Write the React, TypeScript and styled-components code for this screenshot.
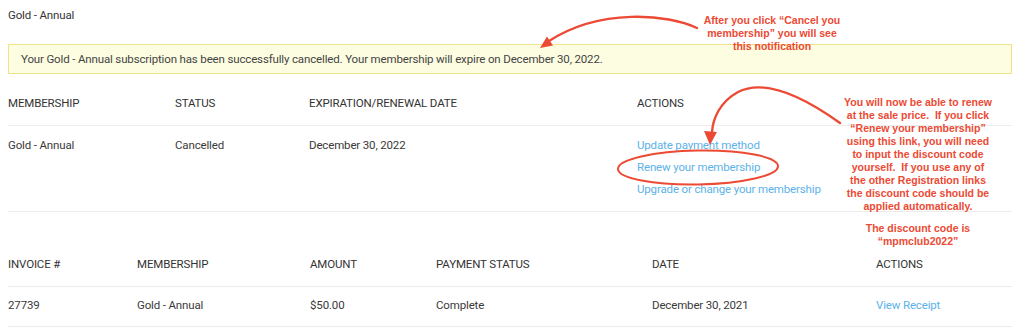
import styled, { createGlobalStyle } from 'styled-components';

const GlobalStyle = createGlobalStyle`
    html, body {
        margin: 0;
        padding: 0;
        background: #ffffff;
    }
    body {
        font-family: Roboto, "Liberation Sans", Arial, sans-serif;
        color: #3a3a3a;
    }
`;

const subscriptions = [
    { name: 'Gold - Annual', status: 'Cancelled', expires: 'December 30, 2022' },
];

const invoices = [
    { id: '27739', name: 'Gold - Annual', amount: '$50.00', status: 'Complete', date: 'December 30, 2021' },
];

const accent = '#ec4a34';

function App() {
    return (
        <>
            <GlobalStyle />
            <Page>
                <Title>Gold - Annual</Title>
                <Notice>
                    Your Gold - Annual subscription has been successfully cancelled. Your membership will expire on December 30, 2022.
                </Notice>

                <Table>
                    <colgroup>
                        <col style={{ width: 167 }} />
                        <col style={{ width: 134 }} />
                        <col style={{ width: 328 }} />
                        <col />
                    </colgroup>
                    <thead>
                        <tr>
                            <Th>Membership</Th>
                            <Th>Status</Th>
                            <Th>Expiration/Renewal Date</Th>
                            <Th>Actions</Th>
                        </tr>
                    </thead>
                    <tbody>
                        {subscriptions.map(s => (
                            <tr key={s.name}>
                                <Td tall>{s.name}</Td>
                                <Td tall>{s.status}</Td>
                                <Td tall>{s.expires}</Td>
                                <Td tall>
                                    <ActionLink href="#">Update payment method</ActionLink>
                                    <ActionLink href="#">Renew your membership</ActionLink>
                                    <ActionLink href="#">Upgrade or change your membership</ActionLink>
                                </Td>
                            </tr>
                        ))}
                    </tbody>
                </Table>

                <Table spaced>
                    <colgroup>
                        <col style={{ width: 129 }} />
                        <col style={{ width: 173 }} />
                        <col style={{ width: 126 }} />
                        <col style={{ width: 216 }} />
                        <col style={{ width: 224 }} />
                        <col />
                    </colgroup>
                    <thead>
                        <tr>
                            <Th>Invoice #</Th>
                            <Th>Membership</Th>
                            <Th>Amount</Th>
                            <Th>Payment Status</Th>
                            <Th>Date</Th>
                            <Th>Actions</Th>
                        </tr>
                    </thead>
                    <tbody>
                        {invoices.map(i => (
                            <tr key={i.id}>
                                <Td>{i.id}</Td>
                                <Td>{i.name}</Td>
                                <Td>{i.amount}</Td>
                                <Td>{i.status}</Td>
                                <Td>{i.date}</Td>
                                <Td><InlineLink href="#">View Receipt</InlineLink></Td>
                            </tr>
                        ))}
                    </tbody>
                </Table>

                <Overlay viewBox="0 0 1024 332" width="1024" height="332">
                    <path d="M 697 28 C 668 14, 600 8, 549 41" fill="none" stroke={accent} strokeWidth="2.4" strokeLinecap="round" />
                    <polygon points="540,48 553,45.5 547,36.5" fill={accent} />
                    <path d="M 840 123 C 805 98, 765 78, 738 92 C 720 102, 713 118, 712 132" fill="none" stroke={accent} strokeWidth="2.4" strokeLinecap="round" />
                    <polygon points="710,145 704,131 717,132" fill={accent} />
                    <ellipse cx="698" cy="167.5" rx="80" ry="17" fill="none" stroke={accent} strokeWidth="2" transform="rotate(-1 698 167.5)" />
                </Overlay>

                <Note style={{ left: 692, top: 14 }} width={160}>
                    After you click “Cancel you<br />
                    membership” you will see<br />
                    this notification
                </Note>
                <Note style={{ left: 832, top: 96 }} width={172}>
                    You will now be able to renew<br />
                    at the sale price.&nbsp; If you click<br />
                    “Renew your membership”<br />
                    using this link, you will need<br />
                    to input the discount code<br />
                    yourself.&nbsp; If you use any of<br />
                    the other Registration links<br />
                    the discount code should be<br />
                    applied automatically.
                    <NoteGap />
                    The discount code is<br />
                    “mpmclub2022”
                </Note>
            </Page>
        </>
    );
}

const Page = styled.div`
    position: relative;
    width: 1024px;
    height: 332px;
    box-sizing: border-box;
    padding: 7px 12px 0 8px;
    overflow: hidden;
    font-size: 11.5px;
    letter-spacing: -0.15px;
`;

const Title = styled.div`
    line-height: 16px;
    color: #333;
`;

const Notice = styled.div`
    margin-top: 21px;
    height: 30px;
    box-sizing: border-box;
    display: flex;
    align-items: center;
    padding: 0 12px;
    background: #fdfde1;
    border: 1px solid #efe38b;
    color: #444;
`;

const Table = styled.table<{ spaced?: boolean }>`
    width: 100%;
    border-collapse: collapse;
    table-layout: fixed;
    margin-top: ${p => (p.spaced ? '41px' : '18px')};
`;

const Th = styled.th`
    text-align: left;
    font-weight: 400;
    text-transform: uppercase;
    line-height: 16px;
    padding: 3px 0 14px;
    border-bottom: 1px solid #ececec;
    color: #333;
    white-space: nowrap;
`;

const Td = styled.td<{ tall?: boolean }>`
    vertical-align: top;
    padding: ${p => (p.tall ? '8px 0 11px' : '10px 0 13px')};
    line-height: ${p => (p.tall ? '22px' : '16px')};
    border-bottom: 1px solid #ececec;
    color: #3a3a3a;
    white-space: nowrap;
`;

const ActionLink = styled.a`
    display: block;
    color: #5cb2ea;
    text-decoration: none;
`;

const InlineLink = styled.a`
    color: #5cb2ea;
    text-decoration: none;
`;

const Overlay = styled.svg`
    position: absolute;
    left: 0;
    top: 0;
    pointer-events: none;
`;

const Note = styled.div<{ width: number }>`
    position: absolute;
    width: ${p => p.width}px;
    text-align: center;
    font-family: "Liberation Sans", Arial, sans-serif;
    font-weight: 700;
    font-size: 10.5px;
    line-height: 13px;
    letter-spacing: 0;
    color: ${accent};
    white-space: nowrap;
`;

const NoteGap = styled.div`
    height: 9px;
`;

export default App;
